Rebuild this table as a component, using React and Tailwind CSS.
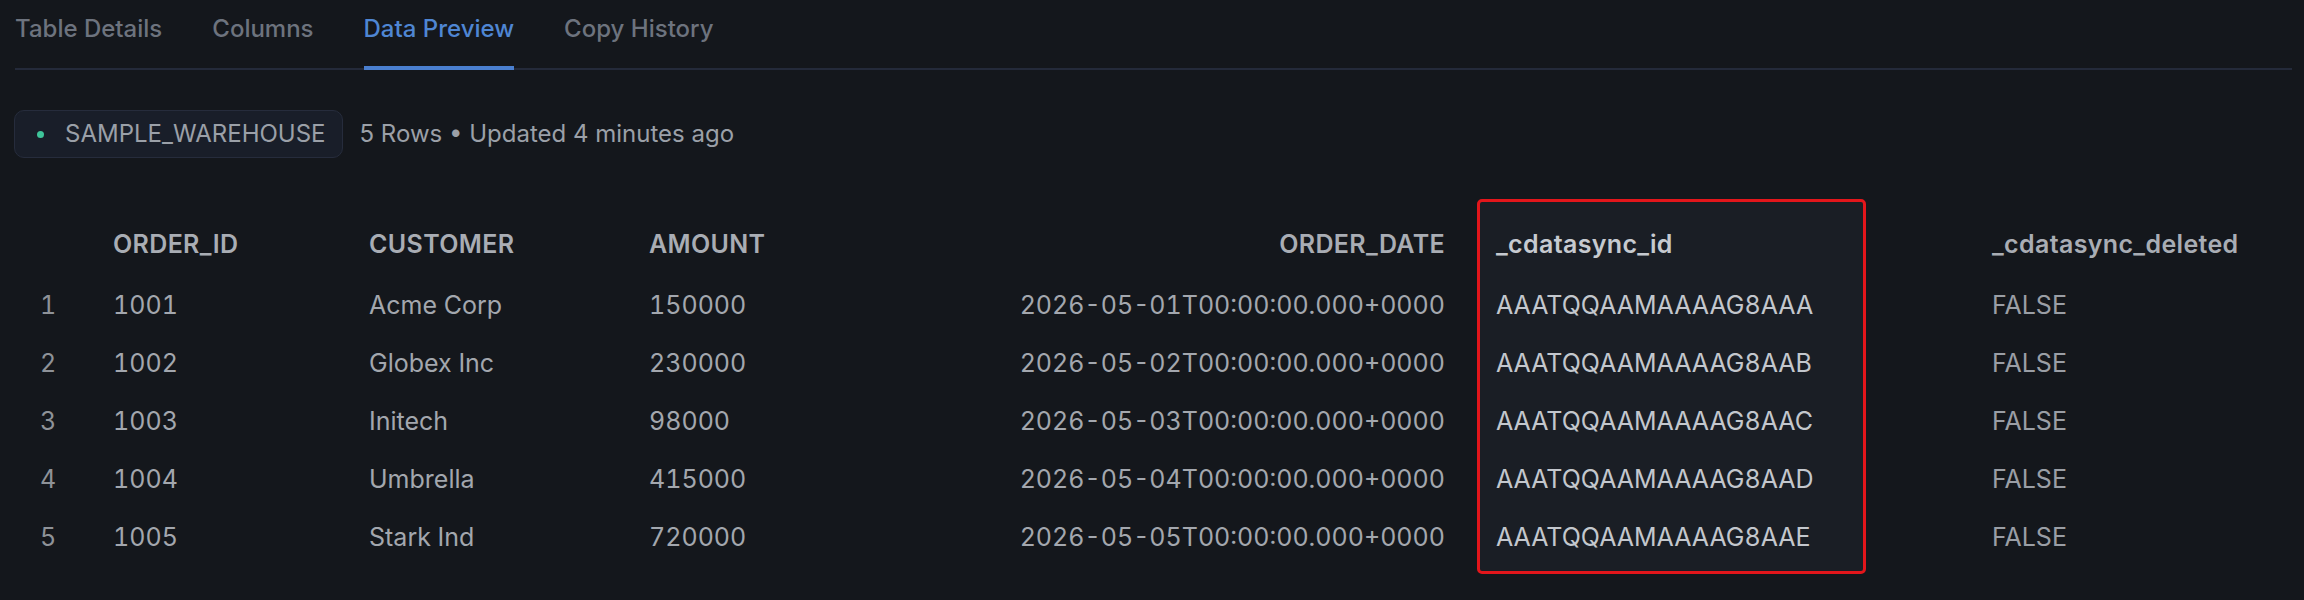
import React from "react";

const rows = [
  ["1", "1001", "Acme Corp", "150000", "2026-05-01T00:00:00.000+0000", "AAATQQAAMAAAAG8AAA", "FALSE"],
  ["2", "1002", "Globex Inc", "230000", "2026-05-02T00:00:00.000+0000", "AAATQQAAMAAAAG8AAB", "FALSE"],
  ["3", "1003", "Initech", "98000", "2026-05-03T00:00:00.000+0000", "AAATQQAAMAAAAG8AAC", "FALSE"],
  ["4", "1004", "Umbrella", "415000", "2026-05-04T00:00:00.000+0000", "AAATQQAAMAAAAG8AAD", "FALSE"],
  ["5", "1005", "Stark Ind", "720000", "2026-05-05T00:00:00.000+0000", "AAATQQAAMAAAAG8AAE", "FALSE"],
];

const columns = [
  { header: "", w: "w-[73px]", cell: "text-[#8e9298]", inner: "px-[16px]" },
  { header: "ORDER_ID", w: "w-[256px]", cell: "text-[#a3a7ae]", inner: "px-[16px]" },
  { header: "CUSTOMER", w: "w-[280px]", cell: "text-[#a3a7ae]", inner: "px-[16px]" },
  { header: "AMOUNT", w: "w-[280px]", cell: "text-[#a3a7ae]", inner: "px-[16px]" },
  { header: "ORDER_DATE", w: "w-[567px]", cell: "text-[#a3a7ae]", inner: "pl-[16px] pr-[29px] justify-end" },
  { header: "_cdatasync_id", w: "w-[389px]", cell: "text-[#c3c7cd]", inner: "px-[16px]", hl: true },
  { header: "_cdatasync_deleted", w: "flex-1", cell: "text-[#9a9ea5]", inner: "pl-[123px] pr-[16px]" },
];

const tabs = ["Table Details", "Columns", "Data Preview", "Copy History"];

export default function App() {
  return (
    <div className="min-h-[600px] w-full bg-[#14171c] font-['Inter','Liberation_Sans',sans-serif] antialiased">
      <div className="pl-[15px] pr-[12px]">
        <div className="flex gap-[50px] border-b-2 border-[#242a3a]">
          {tabs.map((t) => {
            const active = t === "Data Preview";
            return (
              <div
                key={t}
                className={
                  active
                    ? "-mb-[2px] border-b-[4px] border-[#4a7fcf] pt-[15px] pb-[23px] text-[24px] leading-[28px] font-medium text-[#4f86d3]"
                    : "-mb-[2px] border-b-[4px] border-transparent pt-[15px] pb-[23px] text-[24px] leading-[28px] font-medium text-[#6d737e]"
                }
              >
                {t}
              </div>
            );
          })}
        </div>
      </div>

      <div className="mt-[40px] flex items-center pl-[14px]">
        <div className="flex h-[48px] items-center rounded-[10px] border border-[#262c3c] bg-[#191e29] pl-[22px] pr-[16px]">
          <span className="h-[7px] w-[7px] rounded-full bg-[#3ec59a]" />
          <span className="ml-[21px] text-[24px] text-[#9ba0a8]">SAMPLE_WAREHOUSE</span>
        </div>
        <span className="ml-[17px] text-[24px] text-[#9ba0a8]">5 Rows • Updated 4 minutes ago</span>
      </div>

      <div className="mt-[41px] flex pl-[21px]">
        {columns.map((c, ci) => (
          <div
            key={ci}
            className={
              c.hl
                ? `${c.w} flex flex-col rounded-[5px] border-[3px] border-[#e3161b] bg-[#1a1e25] pt-[11px] pb-[4px]`
                : `${c.w} flex flex-col border-[3px] border-transparent pt-[11px] pb-[4px]`
            }
          >
            <div
              className={`flex h-[64px] items-center ${c.inner} text-[25px] tracking-[0.35px] font-semibold ${
                c.hl ? "text-[#c6cad0]" : "text-[#a9adb4]"
              } whitespace-nowrap`}
            >
              {c.header}
            </div>
            {rows.map((r, ri) => (
              <div
                key={ri}
                className={`flex h-[58px] items-center ${c.inner} text-[25px] tabular-nums ${c.cell} whitespace-nowrap`}
              >
                {r[ci]}
              </div>
            ))}
          </div>
        ))}
      </div>
    </div>
  );
}
